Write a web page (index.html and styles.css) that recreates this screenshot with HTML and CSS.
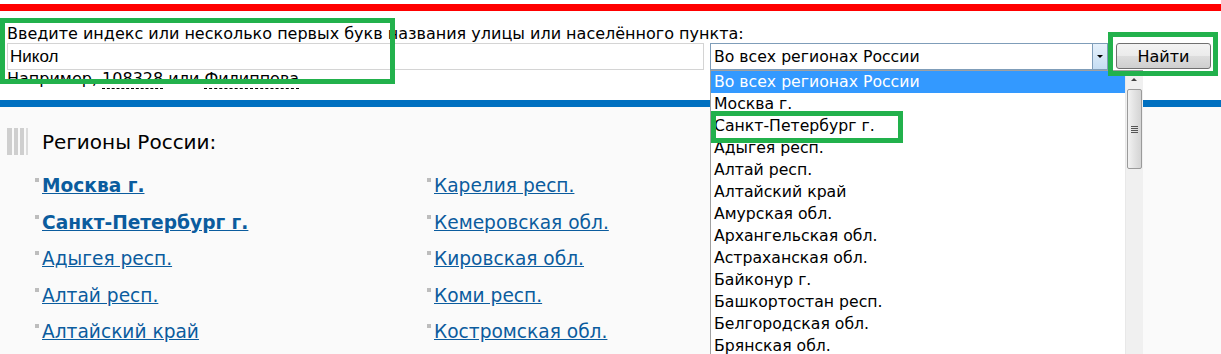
FILE: index.html
```html
<!DOCTYPE html>
<html lang="ru">
<head>
    <meta charset="UTF-8">
    <title>Поиск индекса</title>
    <link rel="stylesheet" href="styles.css">
</head>
<body>
    <div class="red-line"></div>
    <div class="search">
        <div class="search-label">Введите индекс или несколько первых букв названия улицы или населённого пункта:</div>
        <div class="search-row">
            <input type="text" class="search-input" value="Никол">
            <div class="region-select">
                <span class="region-value">Во всех регионах России</span>
                <span class="region-arrow"></span>
            </div>
            <button class="search-button">Найти</button>
        </div>
        <div class="hint">Например, <span class="sample">108328</span> или <span class="sample">Филиппова</span>.</div>
    </div>
    <div class="blue-line"></div>
    <div class="regions">
        <div class="regions-title">
            <span class="stripes"><i></i><i></i><i></i><i></i></span>
            Регионы России:
        </div>
        <div class="regions-list">
            <ul class="col">
                <li><a href="#" class="big">Москва г.</a></li>
                <li><a href="#" class="big">Санкт-Петербург г.</a></li>
                <li><a href="#">Адыгея респ.</a></li>
                <li><a href="#">Алтай респ.</a></li>
                <li><a href="#">Алтайский край</a></li>
            </ul>
            <ul class="col">
                <li><a href="#">Карелия респ.</a></li>
                <li><a href="#">Кемеровская обл.</a></li>
                <li><a href="#">Кировская обл.</a></li>
                <li><a href="#">Коми респ.</a></li>
                <li><a href="#">Костромская обл.</a></li>
            </ul>
        </div>
    </div>

    <!-- opened select list -->
    <div class="dropdown">
        <ul class="options">
            <li class="selected">Во всех регионах России</li>
            <li>Москва г.</li>
            <li>Санкт-Петербург г.</li>
            <li>Адыгея респ.</li>
            <li>Алтай респ.</li>
            <li>Алтайский край</li>
            <li>Амурская обл.</li>
            <li>Архангельская обл.</li>
            <li>Астраханская обл.</li>
            <li>Байконур г.</li>
            <li>Башкортостан респ.</li>
            <li>Белгородская обл.</li>
            <li>Брянская обл.</li>
        </ul>
        <div class="scrollbar">
            <span class="scroll-up"></span>
            <span class="scroll-thumb"><b></b><b></b><b></b><b></b></span>
        </div>
    </div>

    <!-- green marks -->
    <div class="mark mark-input"></div>
    <div class="mark mark-button"></div>
    <div class="mark mark-option"></div>
</body>
</html>
```

FILE: styles.css
```css
body {
    margin: 0;
    font-family: "DejaVu Sans", Verdana, sans-serif;
    font-size: 16px;
    color: #000;
    background: #fff;
}

.red-line {
    height: 7px;
    margin-top: 4px;
    background: #ff0000;
}

.search {
    padding: 14px 7px 0 7px;
}

.search-label {
    height: 18px;
    line-height: 18px;
}

.search-row {
    display: flex;
    align-items: flex-start;
    height: 27px;
}

.search-input {
    box-sizing: border-box;
    width: 697px;
    height: 27px;
    margin: 0;
    padding: 0 2px;
    border: 1px solid #d4d4d4;
    font-family: "Liberation Sans", Arial, sans-serif;
    font-size: 17px;
    outline: none;
}

.region-select {
    box-sizing: border-box;
    display: flex;
    width: 398px;
    height: 27px;
    margin-left: 6px;
    border: 1px solid #7f9db9;
    background: #fff;
}

.region-value {
    flex: 1;
    padding-left: 3px;
    line-height: 25px;
    font-size: 15.7px;
}

.region-arrow {
    position: relative;
    width: 14px;
    border-left: 1px solid #7f9db9;
    background: linear-gradient(#e6f1fb, #c5ddf3);
}

.region-arrow::after {
    content: "";
    position: absolute;
    left: 4px;
    top: 11px;
    border-left: 3px solid transparent;
    border-right: 3px solid transparent;
    border-top: 3px solid #000;
}

.search-button {
    box-sizing: border-box;
    width: 95px;
    height: 26px;
    margin-left: 8px;
    border: 1px solid #707070;
    border-radius: 3px;
    background: linear-gradient(#f3f3f3 0%, #ebebeb 50%, #dddddd 51%, #cfcfcf 100%);
    font-family: inherit;
    font-size: 16px;
    color: #000;
}

.hint {
    height: 18px;
    line-height: 18px;
}

.sample {
    border-bottom: 1px dashed #000;
}

.blue-line {
    height: 7px;
    margin-top: 12px;
    background: #0070c0;
}

.regions {
    background: #fafafa;
    height: 247px;
    padding-top: 21px;
    box-sizing: border-box;
}

.regions-title {
    display: flex;
    align-items: center;
    height: 27px;
    padding-left: 7px;
    font-size: 20px;
}

.stripes {
    display: flex;
    gap: 2px;
    height: 27px;
    margin-right: 14px;
}

.stripes i {
    width: 4px;
    background: #cfcfcf;
}

.stripes i:first-child {
    width: 5px;
}

.stripes i:last-child {
    width: 2px;
    background: #dcdcdc;
}

.regions-list {
    display: flex;
    padding-left: 35px;
    margin-top: 20px;
}

.col {
    list-style: none;
    margin: 0;
    padding: 0;
    width: 392px;
}

.col li {
    height: 36.5px;
    font-size: 18.6px;
}

.col li::before {
    content: "";
    display: inline-block;
    width: 4px;
    height: 4px;
    margin-right: 3px;
    vertical-align: 10px;
    background: #bdbdbd;
}

.col a {
    color: #0b5c9e;
}

.col a.big {
    font-weight: bold;
}

.dropdown {
    position: absolute;
    left: 710px;
    top: 70px;
    width: 433px;
    height: 290px;
    box-sizing: border-box;
    display: flex;
    border-left: 1px solid #a0a0a0;
    border-top: 1px solid #a0a0a0;
    background: #fff;
    overflow: hidden;
}

.options {
    flex: 1;
    list-style: none;
    margin: 0;
    padding: 0;
}

.options li {
    height: 22px;
    line-height: 22px;
    padding-left: 3px;
    font-size: 15.7px;
    white-space: nowrap;
}

.options li.selected {
    background: #3399ff;
    color: #fff;
}

.scrollbar {
    position: relative;
    width: 17px;
    background: #f0f0f0;
    border-left: 1px solid #e8e8e8;
}

.scroll-up {
    position: absolute;
    left: 5px;
    top: 7px;
    border-left: 3px solid transparent;
    border-right: 3px solid transparent;
    border-bottom: 3px solid #404040;
}

.scroll-thumb {
    position: absolute;
    left: 1px;
    top: 18px;
    width: 13px;
    height: 78px;
    border: 1px solid #9a9a9a;
    border-radius: 2px;
    background: linear-gradient(90deg, #f2f2f2, #e2e2e2 50%, #d4d4d4);
    display: flex;
    flex-direction: column;
    justify-content: center;
    align-items: center;
    gap: 1px;
}

.scroll-thumb b {
    width: 7px;
    height: 1px;
    background: #555;
}

.mark {
    position: absolute;
    box-sizing: border-box;
    border: 5px solid #22b14c;
}

.mark-input {
    left: 0;
    top: 18px;
    width: 395px;
    height: 66px;
}

.mark-button {
    left: 1108px;
    top: 32px;
    width: 110px;
    height: 44px;
}

.mark-option {
    left: 711px;
    top: 111px;
    width: 192px;
    height: 32px;
}
```
